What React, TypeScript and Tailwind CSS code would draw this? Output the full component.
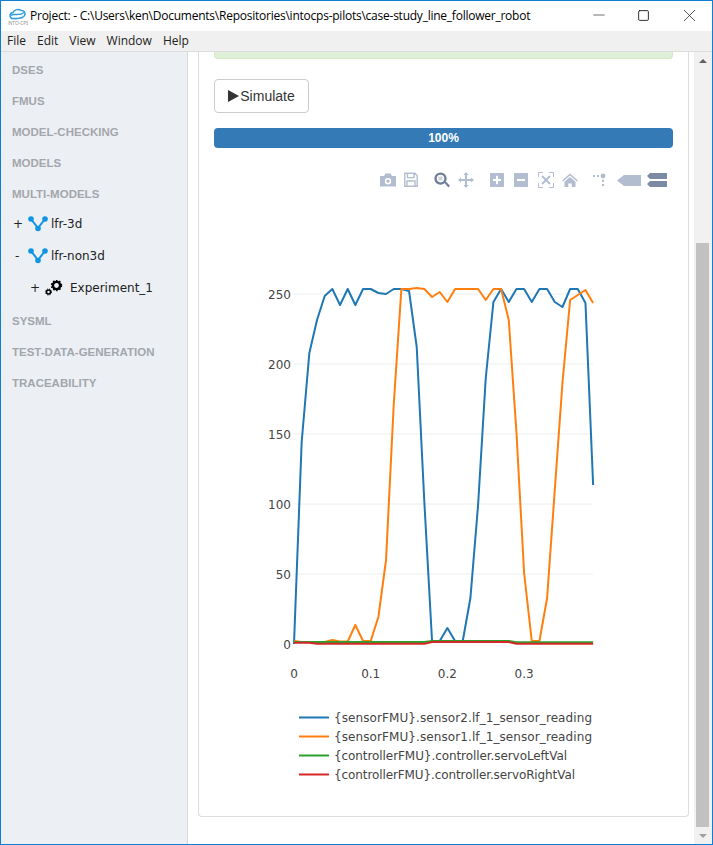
import React from "react";
import { Minus, Square, X } from "lucide-react";

const STEP = 7.67;

// y pixel of every sample, the x follows from the sample index
const blue = [
  644, 442, 353, 320, 296, 289, 305, 289, 305, 289, 289, 293, 294, 289, 289, 291, 347, 503, 641, 641,
  628, 641, 641, 598, 505, 378, 302, 289, 302, 289, 289, 302, 289, 289, 302, 307, 289, 289, 303, 485,
];
const orange = [
  641, 642, 642, 642, 642, 640, 641.5, 641.5, 625, 641, 641, 617, 560, 405, 289, 289, 288, 289, 297, 292,
  302, 289, 289, 289, 289, 300, 289, 289, 320, 432, 573, 641, 641, 598, 490, 383, 300, 295, 290, 303,
];
const green = [
  642, 642, 642, 642, 642, 642, 642, 642, 642, 642, 642, 642, 642, 642, 642, 642, 642, 642, 641, 641,
  641, 641, 641, 641, 641, 641, 641, 641, 641, 642.3, 642.3, 642.3, 642.3, 642.3, 642.3, 642.3, 642.3, 642.3, 642.3, 642.3,
];
const red = [
  642.8, 642.8, 642.8, 643.8, 643.8, 643.8, 643.8, 643.8, 643.8, 643.8, 643.8, 643.8, 643.8, 643.8, 643.8, 643.8, 643.8, 643.8, 642, 642,
  642, 642, 642, 642, 642, 642, 642, 642, 642, 643.8, 643.8, 643.8, 643.8, 643.8, 643.8, 643.8, 643.8, 643.8, 643.8, 643.8,
];

const toPoints = (ys: number[]) => ys.map((y, i) => `${294 + i * STEP},${y}`).join(" ");

const series = [
  { color: "#1f77b4", ys: blue, label: "{sensorFMU}.sensor2.lf_1_sensor_reading", width: 258 },
  { color: "#ff7f0e", ys: orange, label: "{sensorFMU}.sensor1.lf_1_sensor_reading", width: 258 },
  { color: "#2ca02c", ys: green, label: "{controllerFMU}.controller.servoLeftVal", width: 233 },
  { color: "#d62728", ys: red, label: "{controllerFMU}.controller.servoRightVal", width: 241 },
];

const yTicks = [250, 200, 150, 100, 50, 0];
const xTicks = ["0", "0.1", "0.2", "0.3"];

const ToolIcon = ({ w = 16, className, children }: { w?: number; className?: string; children: React.ReactNode }) => (
  <svg width={w} height={16} viewBox={`0 0 ${w} 16`} className={className}>
    {children}
  </svg>
);

const PlotToolbar = () => (
  <div className="flex items-center justify-end h-4 pr-[6px] text-[#b3bdd0]">
    <ToolIcon>
      <path fill="currentColor" fillRule="evenodd" d="M0 4h4l1.5-2.5h5L12 4h4v10.5H0zM8 6a3.2 3.2 0 1 0 0 6.4A3.2 3.2 0 0 0 8 6zm0 1.6a1.6 1.6 0 1 1 0 3.2 1.6 1.6 0 0 1 0-3.2z" />
    </ToolIcon>
    <ToolIcon w={14} className="ml-2">
      <path fill="none" stroke="currentColor" strokeWidth="1.4" d="M.8 1.2h10l2.4 2.4v10.6H.8zM3.5 1.2v4.4h6.5V1.2M3 14V9h8v5" />
    </ToolIcon>
    <ToolIcon className="ml-4 text-[#6f7d99]">
      <path fill="none" stroke="currentColor" strokeWidth="2.4" d="M6.5 1.6a5 5 0 0 1 0 10 5 5 0 0 1 0-10z" />
      <path fill="currentColor" d="M10.5 10.8l1.4-1.4 4 4.4-1.6 1.6z" />
      <path fill="#6f7d99" opacity="0.35" d="M4.5 4.5h4v4h-4z" />
    </ToolIcon>
    <ToolIcon className="ml-2">
      <path fill="currentColor" d="M8 0l2.6 3H9v4h4V5.4l3 2.6-3 2.6V9H9v4h1.6L8 16l-2.6-3H7V9H3v1.6L0 8l3-2.6V7h4V3H5.4z" />
    </ToolIcon>
    <ToolIcon w={14} className="ml-4">
      <path fill="currentColor" fillRule="evenodd" d="M0 1h14v14H0zM6 3.8v3.2H3v2h3v3.2h2V9h3V7H8V3.8z" />
    </ToolIcon>
    <ToolIcon w={14} className="ml-[10px]">
      <path fill="currentColor" fillRule="evenodd" d="M0 1h14v14H0zM3 7v2h8V7z" />
    </ToolIcon>
    <ToolIcon className="ml-[10px]">
      <path fill="none" stroke="currentColor" strokeWidth="1" d="M.5 5V.5H5M11 .5h4.5V5M15.5 11v4.5H11M5 15.5H.5V11" />
      <path fill="none" stroke="currentColor" strokeWidth="1.8" d="M4 4l8 8M12 4l-8 8" />
    </ToolIcon>
    <ToolIcon className="ml-2">
      <path fill="currentColor" d="M8 1.5L16 8.5l-1 1L8 3.6 1 9.5l-1-1zM8 5l5.5 4.8V15H9.8v-3.5H6.2V15H2.5V9.8z" />
    </ToolIcon>
    <ToolIcon className="ml-[14px]">
      <circle cx="11" cy="4" r="2.4" fill="currentColor" />
      <path fill="currentColor" d="M1 3h2v2H1zM5 3h2v2H5zM10 8h2v2h-2zM10 12h2v2h-2z" />
    </ToolIcon>
    <ToolIcon w={24} className="ml-[9px]">
      <path fill="currentColor" d="M0 8.5l7-5.5h17v11H7z" />
    </ToolIcon>
    <ToolIcon w={20} className="ml-[6px] text-[#7d8aa6]">
      <path fill="currentColor" d="M3 1h17v6H3L0 4zM3 9h17v6H3l-3-3z" />
    </ToolIcon>
  </div>
);

const Chart = () => (
  <svg width={459} height={580} viewBox="214 210 459 580" className="block" style={{ fontFamily: '"DejaVu Sans", sans-serif' }}>
    {yTicks.slice(0, 5).map((t, i) => (
      <line key={t} x1={294} x2={593} y1={294 + i * 70} y2={294 + i * 70} stroke="#eeeeee" strokeWidth={1} />
    ))}
    {yTicks.map((t, i) => (
      <text key={t} x={291} y={298.5 + i * 70} textAnchor="end" fontSize={12} fill="#444444">
        {t}
      </text>
    ))}
    {xTicks.map((t, i) => (
      <text key={t} x={294 + i * 76.7} y={678} textAnchor="middle" fontSize={12} fill="#444444">
        {t}
      </text>
    ))}
    {series.map((s) => (
      <polyline key={s.color} points={toPoints(s.ys)} fill="none" stroke={s.color} strokeWidth={2} strokeLinejoin="round" />
    ))}
    {series.map((s, i) => (
      <g key={s.label}>
        <line x1={299} x2={329} y1={717.5 + i * 19} y2={717.5 + i * 19} stroke={s.color} strokeWidth={2} />
        <text x={334} y={722 + i * 19} fontSize={12} fill="#444444" textLength={s.width}>
          {s.label}
        </text>
      </g>
    ))}
  </svg>
);

const NavHead = ({ children }: { children: React.ReactNode }) => (
  <div className="h-[31px] pl-[11px] leading-[31px] text-[11.5px] font-bold text-[#a3a6ab]" style={{ fontFamily: '"Liberation Sans", sans-serif' }}>
    {children}
  </div>
);

const FlowIcon = () => (
  <svg width={20} height={16} viewBox="0 0 20 16" className="shrink-0">
    <path d="M3 3l7 9 7-9" fill="none" stroke="#0f95e2" strokeWidth="2" />
    <circle cx="3" cy="3" r="2.8" fill="#0f95e2" />
    <circle cx="17" cy="3" r="2.8" fill="#0f95e2" />
    <circle cx="10" cy="12.5" r="2.8" fill="#0f95e2" />
  </svg>
);

const GearsIcon = () => (
  <svg width={18} height={16} viewBox="0 0 18 16" className="shrink-0">
    <circle cx="11.5" cy="5.5" r="3.6" fill="none" stroke="#000" strokeWidth="2.4" />
    <circle cx="11.5" cy="5.5" r="5" fill="none" stroke="#000" strokeWidth="1.4" strokeDasharray="1.6 1.6" />
    <circle cx="3.5" cy="12" r="2" fill="none" stroke="#000" strokeWidth="1.5" />
    <circle cx="3.5" cy="12" r="3" fill="none" stroke="#000" strokeWidth="1" strokeDasharray="1.2 1.2" />
  </svg>
);

const TreeRow = ({ children }: { children: React.ReactNode }) => (
  <div className="flex items-center h-8 pb-[4px] text-xs text-[#222]" style={{ fontFamily: '"DejaVu Sans", sans-serif' }}>
    {children}
  </div>
);

const App: React.FC = () => {
  return (
    <div className="w-[713px] h-[845px] flex flex-col overflow-hidden bg-white border border-[#0f7fd6]" style={{ fontFamily: '"Open Sans", sans-serif' }}>
      {/* Title bar */}
      <div className="h-[30px] shrink-0 flex items-center bg-white">
        <svg width={20} height={20} viewBox="0 0 20 20" className="ml-[7px] shrink-0">
          <path d="M4 12.5C1 11 1.5 7 5 6.5 6 3.5 11 2.5 13 4.5c3-.5 5 2.5 3.5 5-1 2-6 3.500-12.500 3z" fill="none" stroke="#2f9fe0" strokeWidth="1.5" />
          <path d="M2.500 9.500c4-3 8 1.500 13.500-3" fill="none" stroke="#2f9fe0" strokeWidth="1.500" />
          <text x="10" y="18.500" textAnchor="middle" fontSize="4.800" fill="#8a8a8a">
            INTO-CPS
          </text>
        </svg>
        <span className="ml-[2px] text-xs tracking-[-0.02em] text-black whitespace-nowrap">
          Project: - C:\Users\ken\Documents\Repositories\intocps-pilots\case-study_line_follower_robot
        </span>
        <div className="ml-auto mb-[2px] flex items-center text-[#111]">
          <Minus size={18} strokeWidth={0.8} className="mr-[29px]" />
          <Square size={13} strokeWidth={1.6} className="mr-[29px]" />
          <X size={21} strokeWidth={0.8} className="mr-[12px]" />
        </div>
      </div>

      {/* Menu bar */}
      <div className="h-[21px] shrink-0 flex items-center gap-[11px] pl-[6px] bg-[#f0f0f0] border-b border-[#dcdcdc] text-xs text-[#222]">
        <span>File</span>
        <span>Edit</span>
        <span>View</span>
        <span>Window</span>
        <span>Help</span>
      </div>

      <div className="flex-1 flex min-h-0">
        {/* Sidebar */}
        <div className="w-[187px] shrink-0 bg-[#ecf0f5] border-r border-[#d9d9d9] pt-[3px]">
          <NavHead>DSES</NavHead>
          <NavHead>FMUS</NavHead>
          <NavHead>MODEL-CHECKING</NavHead>
          <NavHead>MODELS</NavHead>
          <NavHead>MULTI-MODELS</NavHead>
          <TreeRow>
            <span className="w-[27px] pl-[12px]">+</span>
            <FlowIcon />
            <span className="ml-[3px]">lfr-3d</span>
          </TreeRow>
          <TreeRow>
            <span className="w-[27px] pl-[14px]">-</span>
            <FlowIcon />
            <span className="ml-[3px]">lfr-non3d</span>
          </TreeRow>
          <TreeRow>
            <span className="w-[44px] pl-[29px]">+</span>
            <GearsIcon />
            <span className="ml-[7px]">Experiment_1</span>
          </TreeRow>
          <NavHead>SYSML</NavHead>
          <NavHead>TEST-DATA-GENERATION</NavHead>
          <NavHead>TRACEABILITY</NavHead>
        </div>

        {/* Main pane */}
        <div className="flex-1 min-w-0 pl-[10px] pr-[5px] bg-white">
          <div className="w-[491px] h-[765px] border border-t-0 border-[#dddddd] rounded-b-[4px] px-[15px] flex flex-col overflow-hidden">
            <div className="h-[7px] shrink-0 bg-[#dff0d8] border border-t-0 border-[#d6e9c6] rounded-b-[4px]" />
            <div className="mt-5 w-[95px] h-[34px] shrink-0 flex items-center justify-center gap-[1px] rounded-[4px] border border-[#cccccc] bg-white text-sm text-[#333]" style={{ fontFamily: '"Liberation Sans", sans-serif' }}>
              <svg width={11} height={12} viewBox="0 0 11 12">
                <path d="M0 0l11 6-11 6z" fill="#333333" />
              </svg>
              <span>Simulate</span>
            </div>
            <div className="mt-[15px] h-5 shrink-0 rounded-[4px] bg-[#337ab7] text-center text-xs font-bold leading-5 text-white" style={{ fontFamily: '"Liberation Sans", sans-serif' }}>
              100%
            </div>
            <div className="mt-6 shrink-0">
              <PlotToolbar />
            </div>
            <div className="mt-[22px] shrink-0">
              <Chart />
            </div>
          </div>
        </div>

        {/* Scrollbar */}
        <div className="w-[18px] shrink-0 bg-[#f1f1f1] flex flex-col pl-[2px]">
          <div className="h-[17px] w-[14px] shrink-0 flex items-center justify-center">
            <div className="w-0 h-0 border-x-[4px] border-x-transparent border-b-[4px] border-b-[#606060]" />
          </div>
          <div className="mt-[174px] w-[13px] h-[584px] shrink-0 bg-[#c1c1c1]" />
          <div className="flex-1 w-[14px] flex items-center justify-center">
            <div className="w-0 h-0 border-x-[4px] border-x-transparent border-t-[4px] border-t-[#a0a0a0]" />
          </div>
        </div>
      </div>
    </div>
  );
};

export default App;
